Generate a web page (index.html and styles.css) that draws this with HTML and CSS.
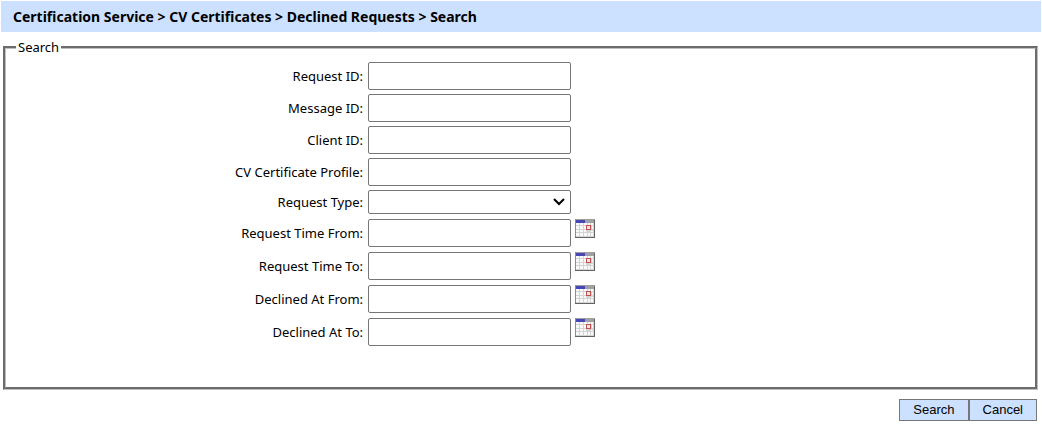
FILE: index.html
```
<!DOCTYPE html>
<html lang="en">
<head>
<meta charset="utf-8">
<title>Declined Requests - Search</title>
<link rel="stylesheet" href="styles.css">
</head>
<body>
<svg class="symbols" aria-hidden="true">
  <symbol id="calendar" viewBox="0 0 20 19">
    <rect width="20" height="19" fill="#d4d4d4"/>
    <path fill="#fafafa" d="M1 4h3v2H1zM5 4h3v2H5zM9 4h3v2H9zM13 4h2v2h-2zM16 4h2v2h-2zM1 7h3v3H1zM5 7h3v3H5zM9 7h2v3H9zM17 7h1v3h-1zM1 11h3v2H1zM5 11h3v2H5zM9 11h2v2H9zM16 12h2v1h-2zM1 14h3v3H1zM5 14h3v3H5zM9 14h3v3H9zM13 14h2v3h-2zM16 14h2v3h-2z"/>
    <path fill="#a0a0a4" d="M0 0h20v4H0z"/>
    <path fill="#4646b4" d="M1 1h9v3H1z"/>
    <path fill="#8c8c8c" d="M0 0h1v19H0z"/>
    <path fill="#646464" d="M19 1h1v18H0v-1h19z"/>
    <rect x="11.5" y="6.5" width="4" height="4" fill="#f4e4e4" stroke="#c05050"/>
  </symbol>
</svg>
<h1 class="titlebar">Certification Service &gt; CV Certificates &gt; Declined Requests &gt; Search</h1>
<form class="search-form">
  <fieldset class="panel">
    <legend class="panel-title">Search</legend>
    <div class="row"><label for="request-id">Request ID:</label><input class="field" id="request-id" type="text"></div>
    <div class="row"><label for="message-id">Message ID:</label><input class="field" id="message-id" type="text"></div>
    <div class="row"><label for="client-id">Client ID:</label><input class="field" id="client-id" type="text"></div>
    <div class="row"><label for="profile">CV Certificate Profile:</label><input class="field" id="profile" type="text"></div>
    <div class="row"><label for="type">Request Type:</label><span class="select-wrap"><select class="field select" id="type"><option></option></select><svg class="chevron" viewBox="0 0 12 8" aria-hidden="true"><path d="M1 1l5 5 5-5"/></svg></span></div>
    <div class="row dated"><label for="time-from">Request Time From:</label><input class="field" id="time-from" type="text"><button class="picker" type="button" aria-label="Pick request time from"><svg class="calendar"><use href="#calendar"/></svg></button></div>
    <div class="row dated"><label for="time-to">Request Time To:</label><input class="field" id="time-to" type="text"><button class="picker" type="button" aria-label="Pick request time to"><svg class="calendar"><use href="#calendar"/></svg></button></div>
    <div class="row dated"><label for="declined-from">Declined At From:</label><input class="field" id="declined-from" type="text"><button class="picker" type="button" aria-label="Pick declined at from"><svg class="calendar"><use href="#calendar"/></svg></button></div>
    <div class="row dated"><label for="declined-to">Declined At To:</label><input class="field" id="declined-to" type="text"><button class="picker" type="button" aria-label="Pick declined at to"><svg class="calendar"><use href="#calendar"/></svg></button></div>
  </fieldset>
  <div class="actions"><button class="action" type="submit">Search</button><button class="action" type="button">Cancel</button></div>
</form>
</body>
</html>
```
FILE: styles.css
```
* { box-sizing: border-box; }
body {
  margin: 1px;
  background: #fff;
  color: #000;
  font: 13px/18px Tahoma, "Noto Sans", sans-serif;
}
.symbols { display: none; }
.titlebar {
  margin: 0;
  padding: 7px 12px 6px;
  background: #cce0ff;
  font-size: 14px;
  line-height: 18px;
}
.search-form { margin: 6px 3px 0 2px; }
.panel {
  margin: 0;
  padding: 6px 6px 37px 0;
  border: 3px groove #c0c0c0;
}
.panel-title { margin-left: 10px; padding: 0 2px; }
.row {
  display: grid;
  grid-template-columns: 35% 203px auto 1fr;
  column-gap: 4px;
  margin-bottom: 4px;
}
.row label { align-self: center; padding-right: 1px; text-align: right; }
.dated { margin-top: 5px; }
.field {
  width: 100%;
  height: 28px;
  margin: 0;
  padding: 2px 4px;
  border: 1px solid #767676;
  border-radius: 2px;
  background: #fff;
  font: inherit;
}
.select-wrap { display: grid; align-items: center; }
.select { grid-area: 1 / 1; height: 24px; appearance: none; }
.chevron {
  grid-area: 1 / 1;
  justify-self: end;
  width: 12px;
  height: 8px;
  margin-right: 6px;
  fill: none;
  stroke: #000;
  stroke-width: 2;
  pointer-events: none;
}
.picker { align-self: start; padding: 0; border: 0; background: none; }
.calendar { display: block; width: 20px; height: 19px; }
.actions { display: flex; justify-content: flex-end; margin-top: 9px; padding-right: 1px; }
.action {
  height: 22px;
  padding: 0 13px;
  border: 1px solid #767676;
  background: #cce0ff;
  color: #000;
  font: 13px/18px "Liberation Sans", Arial, sans-serif;
}
```
